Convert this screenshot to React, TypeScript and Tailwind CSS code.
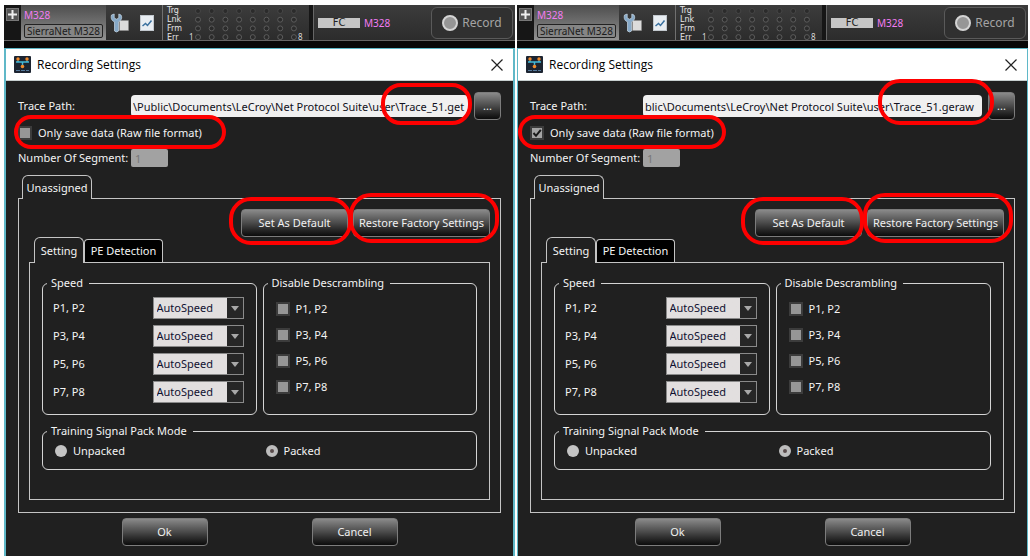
import { useId } from 'react';
import type { ReactNode } from 'react';
import clsx from 'clsx';

const PORT_PAIRS = ['P1, P2', 'P3, P4', 'P5, P6', 'P7, P8'];
const LED_ROWS = ['Trg', 'Lnk', 'Frm', 'Err'];

interface Highlights {
  path: string;
  raw: string;
  defaults: string;
  restore: string;
}

interface PaneProps {
  tracePath: string;
  rawOnly: boolean;
  frame: string;
  marks: Highlights;
}

/* Red callout ring laid over a control */
function Highlight({ className }: { className: string }) {
  return (
    <span
      className={clsx('pointer-events-none absolute z-10 border-4 border-[#fe0000]', className)}
    />
  );
}

function PushButton({ className, children }: { className?: string; children: ReactNode }) {
  return (
    <button
      type="button"
      className={clsx(
        'h-7 rounded-sm border border-[#7c7c7c] bg-linear-to-b from-[#8a8a8a] via-[#4a4a4a] to-[#0c0c0c] whitespace-nowrap text-[#f0f0f0]',
        className,
      )}
    >
      {children}
    </button>
  );
}

function CheckBox({ label, checked = false }: { label: string; checked?: boolean }) {
  return (
    <label className="flex items-center gap-1.5">
      <span className="relative flex size-3.5 shrink-0">
        <input
          type="checkbox"
          defaultChecked={checked}
          className="peer size-3.5 appearance-none border-2 border-[#3c3c3c] bg-[#969696] checked:bg-[#a4a4a4]"
        />
        <svg
          viewBox="0 0 14 14"
          className="pointer-events-none absolute inset-0 hidden size-3.5 peer-checked:block"
        >
          <path d="M3.5 7 L6 9.8 L10.8 3.8" fill="none" stroke="#1a1a1a" strokeWidth="2" />
        </svg>
      </span>
      {label}
    </label>
  );
}

function RadioButton({ name, label, checked = false }: { name: string; label: string; checked?: boolean }) {
  return (
    <label className="flex items-center gap-1.5">
      <input
        type="radio"
        name={name}
        defaultChecked={checked}
        className="size-3 appearance-none rounded-full border-[#bdbdbd] bg-[#c4c4c4] checked:border-4 checked:bg-[#5a4c4c]"
      />
      {label}
    </label>
  );
}

function GroupBox({ title, className, children }: { title: string; className?: string; children: ReactNode }) {
  return (
    <fieldset className={clsx('min-w-0 rounded-md border border-[#d4d4d4] pl-1', className)}>
      <legend className="h-4 pr-1.5 pl-1">{title}</legend>
      {children}
    </fieldset>
  );
}

function SpeedRow({ label }: { label: string }) {
  const id = useId();
  return (
    <div className="flex h-[22px] items-center justify-between">
      <label htmlFor={id}>{label}</label>
      <div className="relative flex h-[22px] w-[91px] border border-[#8a8a8a]">
        <select
          id={id}
          className="w-full appearance-none bg-linear-to-r from-[#e2dfdf] from-[73px] to-[#262626] to-[73px] pl-[3px] text-[#101030]"
        >
          <option>AutoSpeed</option>
        </select>
        <svg viewBox="0 0 8 5" className="pointer-events-none absolute top-2 right-1 h-[5px] w-2">
          <path d="M0 0 H8 L4 5 Z" fill="#a8a8a8" />
        </svg>
      </div>
    </div>
  );
}

function WrenchIcon() {
  return (
    <svg viewBox="0 0 20 20" className="h-5 w-5 shrink-0">
      <rect x="9.500" y="7.500" width="9" height="10" rx="0.500" fill="#dcdcdc" stroke="#8c8c8c" />
      <path
        d="M1.500 2 C0.500 5.500 2 8 4.500 8.800 L4.500 18 Q6.500 20 8.500 18 L8.500 8.800 C11.500 7.500 12.500 4.500 11 2 L8.800 1 L8.800 5 L6.500 6.200 L4.200 5 L4.200 1 Z"
        fill="#86a9c8"
        stroke="#c8d8e6"
        strokeWidth="0.700"
      />
    </svg>
  );
}

function ChartIcon() {
  return (
    <svg viewBox="0 0 14 16" className="h-4 w-3.5 shrink-0">
      <rect x="0.500" y="0.500" width="13" height="15" fill="#e8edf2" stroke="#c2c8ce" />
      <path d="M2.500 11 L5.500 8.500 L7.500 10.500 L11.500 5.500" fill="none" stroke="#39709f" strokeWidth="1.500" />
    </svg>
  );
}

/* Three orange nodes joined by a blue link */
function AppIcon() {
  return (
    <svg viewBox="0 0 17 17" className="size-[17px] shrink-0">
      <rect width="17" height="17" rx="1" fill="#1c2431" />
      <path d="M2 6 H15 M4 4.500 V6 M13 4.500 V6 M8.500 6 V10" fill="none" stroke="#42b8d8" strokeWidth="1.500" />
      <circle cx="4" cy="3" r="1.700" fill="#f08a2c" />
      <circle cx="13" cy="3" r="1.700" fill="#f08a2c" />
      <circle cx="8.500" cy="10.500" r="1.800" fill="#f08a2c" />
      <path d="M2 14.500 H6 M7 14.500 H11 M12 14.500 H15" stroke="#55789a" strokeWidth="1.200" />
    </svg>
  );
}

function LedGrid() {
  return (
    <svg viewBox="0 0 120 36" className="h-9 w-[120px] shrink-0">
      <text x="0" y="34" fontSize="8" fill="#d8d8d8">
        1
      </text>
      {[0, 1, 2, 3].map((row) =>
        [0, 1, 2, 3, 4, 5, 6, 7].map((col) => (
          <circle
            key={`${row}-${col}`}
            cx={9 + col * 13.7}
            cy={5 + row * 8.7}
            r="2.500"
            fill="#2b2b2b"
            stroke={row === 0 ? '#464646' : '#5c5c5c'}
          />
        )),
      )}
      <text x="109" y="34" fontSize="8" fill="#d8d8d8">
        8
      </text>
    </svg>
  );
}

function DeviceBar() {
  return (
    <div className="flex h-9 gap-1 border-b border-[#666] bg-[#161616]">
      <div className="flex flex-1 bg-linear-to-b from-[#3c3c3c] to-[#2c2c2c]">
        <div className="w-[17px] shrink-0 bg-[#161616] pt-[3px] pl-0.5">
          <button type="button" aria-label="Expand" className="flex size-[13px] items-center justify-center border border-[#777] bg-[#555]">
            <svg viewBox="0 0 9 9" className="size-[9px]">
              <path d="M4.500 0 V9 M0 4.500 H9" stroke="#eee" strokeWidth="2" />
            </svg>
          </button>
        </div>
        <div className="w-[85px] shrink-0 bg-linear-to-b from-[#4e4e4e] to-[#929292] px-[3px] pt-[3px]">
          <div className="h-3.5 text-[10px] leading-3.5 text-[#f27cf2]">M328</div>
          <div className="mt-0.5 h-3.5 rounded-xs border border-[#222] bg-[#858585] text-center text-[10px] leading-3 whitespace-nowrap text-[#1c1c1c]">
            SierraNet M328
          </div>
        </div>
        <div className="flex items-center gap-2.5 pr-2 pl-1">
          <WrenchIcon />
          <ChartIcon />
        </div>
        <div className="flex flex-1 border-l border-[#707070] pt-px pl-1">
          <div className="w-[22px] font-['DejaVu_Sans',sans-serif] text-[8px] leading-[9px] text-[#e4e4e4]">
            {LED_ROWS.map((row) => (
              <div key={row}>{row}</div>
            ))}
          </div>
          <LedGrid />
        </div>
      </div>
      <div className="flex w-[202px] shrink-0 items-center border-l border-[#666] bg-linear-to-b from-[#3c3c3c] to-[#2c2c2c] pr-0.5 pl-1">
        <span className="h-2.5 w-[42px] bg-[#c6c6c6] text-center font-['DejaVu_Sans',sans-serif] text-[10px] leading-2.5 text-[#222]">FC</span>
        <span className="ml-1 text-[10px] text-[#f27cf2]">M328</span>
        <button
          type="button"
          className="ml-auto flex h-8 w-[82px] items-center justify-center gap-1 rounded-md border border-[#5a5a5a] bg-[#303030] text-xs text-[#a4a4a4]"
        >
          <span className="size-4 rounded-full border-2 border-[#d4d4d4] bg-[#969696]" />
          Record
        </button>
      </div>
    </div>
  );
}

function RecordingPane({ tracePath, rawOnly, frame, marks }: PaneProps) {
  const id = useId();
  return (
    <section className="min-w-0 bg-[#080808]">
      <DeviceBar />

      <div className={clsx('mt-[7px] border-t border-[#5fb8c8] bg-[#202020]', frame)}>
        {/* Title bar */}
        <header className="flex h-8 items-center gap-1.5 border-b border-[#c8d0d0] bg-white px-2 font-['Open_Sans','Noto_Sans',sans-serif] text-xs text-black">
          <AppIcon />
          <h2>Recording Settings</h2>
          <button type="button" aria-label="Close" className="ml-auto p-0.5">
            <svg viewBox="0 0 12 12" className="size-3">
              <path d="M0.500 0.500 L11.500 11.500 M11.500 0.500 L0.500 11.500" stroke="#222" strokeWidth="1.200" />
            </svg>
          </button>
        </header>

        <div className="px-3 pt-[11px] pb-2.5">
          {/* Trace path */}
          <div className="flex h-7 items-center">
            <label htmlFor={`${id}-path`} className="w-[113px] shrink-0">
              Trace Path:
            </label>
            <div className="relative flex min-w-0 flex-1">
              <input
                id={`${id}-path`}
                type="text"
                defaultValue={tracePath}
                className="h-[22px] w-full min-w-0 rounded-sm bg-[#f0f0f0] px-0.5 text-[#101020]"
              />
              <Highlight className={marks.path} />
            </div>
            <PushButton className="ml-1.5 w-[27px] shrink-0">...</PushButton>
          </div>

          <div className="relative mt-px flex h-6 items-center">
            <CheckBox label="Only save data (Raw file format)" checked={rawOnly} />
            <Highlight className={marks.raw} />
          </div>

          <div className="mt-[3px] flex h-5 items-center">
            <label htmlFor={`${id}-segments`} className="w-[113px] shrink-0 whitespace-nowrap">
              Number Of Segment:
            </label>
            <input
              id={`${id}-segments`}
              type="text"
              defaultValue="1"
              disabled
              className="h-[18px] w-[37px] rounded-xs bg-[#a2a2a2] px-1 text-[#777]"
            />
          </div>

          {/* Port group tab */}
          <div role="tablist" className="mt-[7px] ml-1 flex">
            <button
              type="button"
              role="tab"
              aria-selected="true"
              className="relative -mb-px h-6 w-[70px] rounded-t-md border border-b-0 border-[#c4c4c4] bg-[#202020] text-center"
            >
              Unassigned
            </button>
          </div>

          <div className="border border-[#c4c4c4] px-2.5 pt-2.5 pb-3">
            <div className="flex justify-end gap-[5px]">
              <div className="relative">
                <PushButton className="w-[107px]">Set As Default</PushButton>
                <Highlight className={marks.defaults} />
              </div>
              <div className="relative">
                <PushButton className="w-[137px]">Restore Factory Settings</PushButton>
                <Highlight className={marks.restore} />
              </div>
            </div>

            <div role="tablist" className="ml-[5px] flex items-end">
              <button
                type="button"
                role="tab"
                aria-selected="true"
                className="relative -mb-px h-[26px] w-[50px] rounded-t-md border border-b-0 border-[#c4c4c4] bg-[#202020]"
              >
                Setting
              </button>
              <button
                type="button"
                role="tab"
                aria-selected="false"
                className="h-[23px] w-[79px] rounded-t-sm border border-b-0 border-[#c4c4c4] bg-black whitespace-nowrap"
              >
                PE Detection
              </button>
            </div>

            <div className="border border-[#c4c4c4] px-3 pt-3 pb-[29px]">
              <div className="grid grid-cols-2 gap-1.5">
                <GroupBox title="Speed" className="h-[140px] pr-3">
                  <div className="mt-1.5 flex flex-col gap-1.5 pl-1.5">
                    {PORT_PAIRS.map((pair) => (
                      <SpeedRow key={pair} label={pair} />
                    ))}
                  </div>
                </GroupBox>
                <GroupBox title="Disable Descrambling" className="h-[140px]">
                  <div className="mt-2 flex flex-col gap-1.5 pl-2">
                    {PORT_PAIRS.map((pair) => (
                      <div key={pair} className="flex h-5 items-center">
                        <CheckBox label={pair} />
                      </div>
                    ))}
                  </div>
                </GroupBox>
              </div>

              <GroupBox title="Training Signal Pack Mode" className="mt-2 h-[47px]">
                <div className="mt-1 grid grid-cols-2 pl-2">
                  <RadioButton name={`${id}-pack`} label="Unpacked" />
                  <RadioButton name={`${id}-pack`} label="Packed" checked />
                </div>
              </GroupBox>
            </div>
          </div>

          <div className="mt-[5px] flex justify-center gap-[104px]">
            <PushButton className="w-[86px]">Ok</PushButton>
            <PushButton className="w-[86px]">Cancel</PushButton>
          </div>
        </div>
      </div>
    </section>
  );
}

export default function App() {
  return (
    <main className="grid grid-cols-2 gap-0.5 bg-white pt-[5px] pr-0.5 pl-1 font-['Noto_Sans',sans-serif] text-[11px] leading-4 text-[#f4f4f4]">
      <RecordingPane
        tracePath={'\\Public\\Documents\\LeCroy\\Net Protocol Suite\\user\\Trace_51.get'}
        rawOnly={false}
        frame="border-x-2"
        marks={{
          path: '-top-3 -right-1 h-[42px] w-[91px] rounded-[20px]',
          raw: '-top-1.5 -left-1 h-[34px] w-[212px] rounded-[17px]',
          defaults: '-top-3 -left-3 h-12 w-[123px] rounded-[22px]',
          restore: '-top-4 -left-1 h-[50px] w-[150px] rounded-[22px]',
        }}
      />
      <RecordingPane
        tracePath={'blic\\Documents\\LeCroy\\Net Protocol Suite\\user\\Trace_51.geraw'}
        rawOnly
        frame="border-x"
        marks={{
          path: '-top-4 -right-3 h-[46px] w-[116px] rounded-[22px]',
          raw: '-top-1.5 -left-3 h-[34px] w-[208px] rounded-[17px]',
          defaults: '-top-3 -left-3.5 h-12 w-[123px] rounded-[22px]',
          restore: '-top-4 -left-1 h-[50px] w-[150px] rounded-[22px]',
        }}
      />
    </main>
  );
}
